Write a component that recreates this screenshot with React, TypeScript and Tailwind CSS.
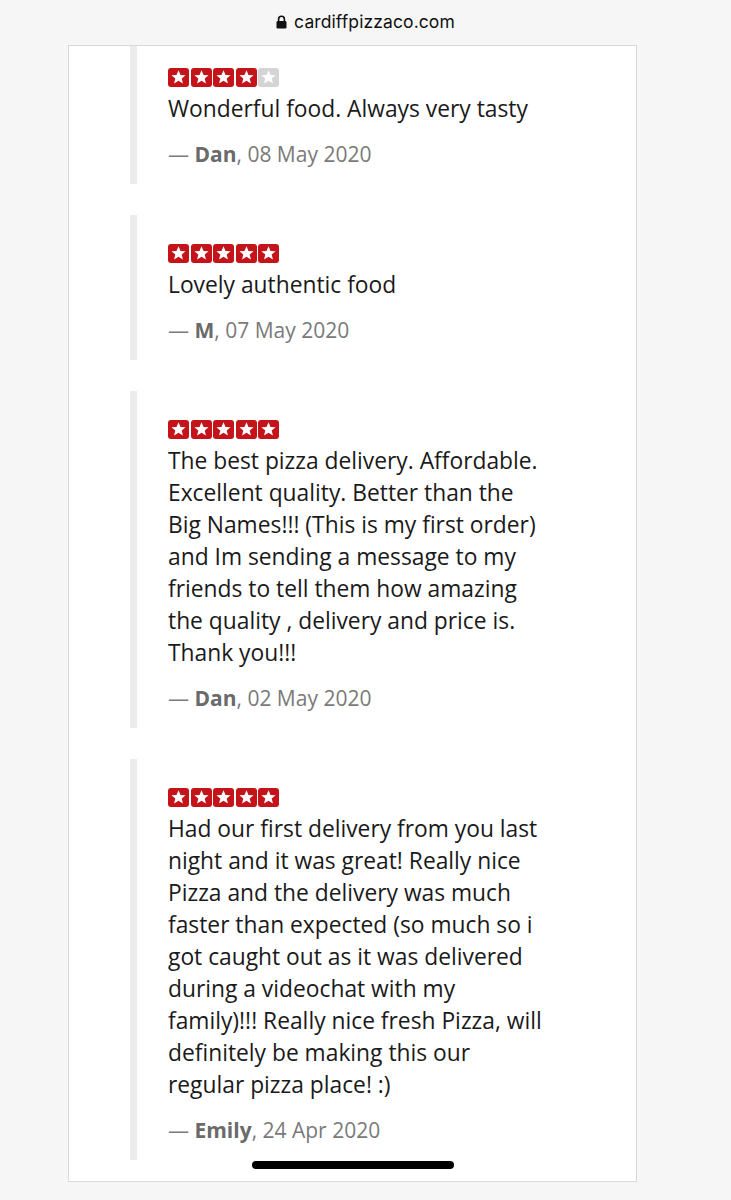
import React from "react";

function Star({ filled }: { filled: boolean }) {
  return (
    <svg width="21" height="19" viewBox="0 0 21 19" className="block">
      <rect x="0" y="0" width="21" height="19" rx="3" fill={filled ? "#c4141a" : "#d4d4d4"} />
      <path
        d="M10.5 2.2 L12.5 7.0 L17.6 7.35 L13.7 10.6 L14.95 15.6 L10.5 12.85 L6.05 15.6 L7.3 10.6 L3.4 7.35 L8.5 7.0 Z"
        fill="#ffffff"
      />
    </svg>
  );
}

function Stars({ n }: { n: number }) {
  return (
    <div className="flex gap-[1.5px] h-[19px]">
      {[0, 1, 2, 3, 4].map((i) => (
        <Star key={i} filled={i < n} />
      ))}
    </div>
  );
}

type Review = { stars: number; lines: string[]; name: string; date: string };

const reviews: Review[] = [
  { stars: 4, lines: ["Wonderful food. Always very tasty"], name: "Dan", date: "08 May 2020" },
  { stars: 5, lines: ["Lovely authentic food"], name: "M", date: "07 May 2020" },
  {
    stars: 5,
    lines: [
      "The best pizza delivery. Affordable.",
      "Excellent quality. Better than the",
      "Big Names!!! (This is my first order)",
      "and Im sending a message to my",
      "friends to tell them how amazing",
      "the quality , delivery and price is.",
      "Thank you!!!",
    ],
    name: "Dan",
    date: "02 May 2020",
  },
  {
    stars: 5,
    lines: [
      "Had our first delivery from you last",
      "night and it was great! Really nice",
      "Pizza and the delivery was much",
      "faster than expected (so much so i",
      "got caught out as it was delivered",
      "during a videochat with my",
      "family)!!! Really nice fresh Pizza, will",
      "definitely be making this our",
      "regular pizza place! :)",
    ],
    name: "Emily",
    date: "24 Apr 2020",
  },
];

export default function App() {
  return (
    <div className="relative min-h-[1200px] w-[731px] bg-[#f6f6f6] overflow-hidden" style={{ fontFamily: "'Open Sans', sans-serif" }}>
      <div className="h-[45px] flex items-center justify-center gap-[7px]">
        <svg width="11" height="14" viewBox="0 0 11 14" className="mb-[1px]">
          <path d="M2.6 6 V4.2 a2.9 2.9 0 0 1 5.8 0 V6" stroke="#111" strokeWidth="1.6" fill="none" />
          <rect x="0.5" y="6" width="10" height="7.6" rx="1.4" fill="#111" />
        </svg>
        <span className="text-[17.5px] text-[#111] tracking-[0.1px]" style={{ fontFamily: "Inter, 'Liberation Sans', sans-serif" }}>
          cardiffpizzaco.com
        </span>
      </div>
      <div className="ml-[68px] w-[569px] h-[1137px] bg-white border border-[#d9d9d9] overflow-hidden">
        <div className="mt-[-7px] ml-[61px] flex flex-col gap-[31px]">
          {reviews.map((r, i) => (
            <div key={i} className="border-l-[7px] border-[#ececec] pl-[31px] pt-[29px] pb-[14px]">
              <Stars n={r.stars} />
              <div className="mt-[6px] text-[22.8px] leading-[32px] text-[#1a1a1a] whitespace-nowrap">
                {r.lines.map((l, j) => (
                  <div key={j}>{l}</div>
                ))}
              </div>
              <div className="mt-[13px] text-[21px] leading-[32px] text-[#7a7a7a]">
                — <span className="font-bold text-[#6a6a6a]">{r.name}</span>, {r.date}
              </div>
            </div>
          ))}
        </div>
      </div>
      <div className="absolute left-[252px] top-[1161px] w-[202px] h-[8px] rounded-full bg-black" />
    </div>
  );
}
